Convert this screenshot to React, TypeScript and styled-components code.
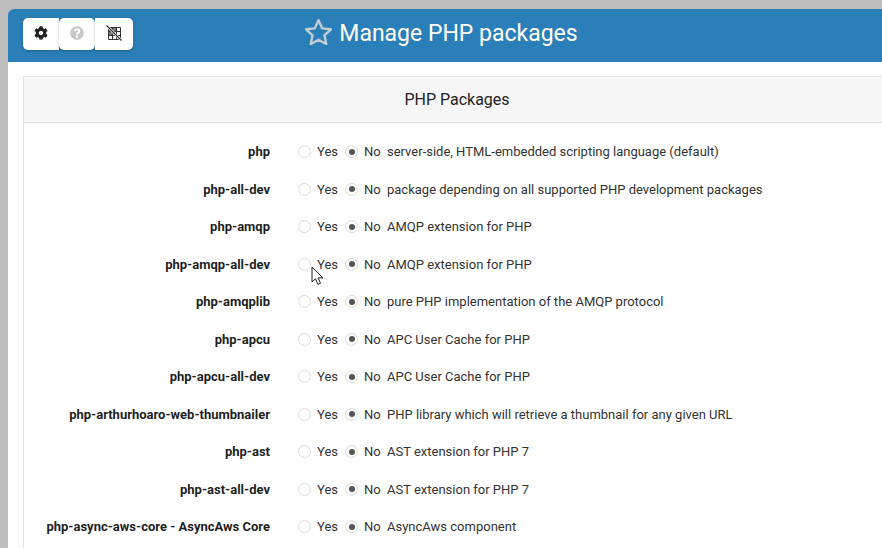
import styled, { createGlobalStyle } from "styled-components";
import { FaCog, FaQuestionCircle } from "react-icons/fa";

const GlobalStyle = createGlobalStyle`
  html, body {
    margin: 0;
    height: 100%;
    overflow: hidden;
    background: #bdbdbd;
    font-family: Roboto, "Liberation Sans", sans-serif;
  }
`;

const Page = styled.div`
  position: relative;
  width: 882px;
  height: 548px;
  padding: 9px 0 0 8px;
  box-sizing: border-box;
  overflow: hidden;
`;

const Window = styled.div`
  width: 874px;
  height: 539px;
  background: #fff;
  border-top-left-radius: 6px;
  overflow: hidden;
`;

const Header = styled.header`
  position: relative;
  height: 53px;
  background: #2a7fb8;
  display: flex;
  align-items: center;
  justify-content: center;
`;

const Toolbar = styled.div`
  position: absolute;
  left: 15px;
  top: 9px;
  display: flex;
`;

const ToolButton = styled.button<{ $muted?: boolean; $round?: string; $wide?: boolean }>`
  width: ${(p) => (p.$wide ? "38px" : "36px")};
  height: 32px;
  padding: 0 0 2px;
  border: 0;
  background: #fff;
  border-radius: ${(p) => p.$round ?? "5px"};
  box-shadow: 0 1px 3px rgba(0, 0, 0, 0.25);
  color: ${(p) => (p.$muted ? "#c8c8c8" : "#222")};
  display: flex;
  align-items: center;
  justify-content: center;
  font-size: 14px;
`;

const Title = styled.h1`
  margin: 0 0 0 -7px;
  display: flex;
  align-items: center;
  gap: 7px;
  color: #fff;
  font-size: 23px;
  font-weight: 400;
  line-height: 28px;
  position: relative;
  top: -2px;
`;

const StarIcon = styled.svg`
  width: 27px;
  height: 26px;
  position: relative;
  top: -2px;
`;

const Content = styled.div`
  padding: 14px 0 0 15px;
`;

const Panel = styled.section`
  width: 880px;
  height: 600px;
  border: 1px solid #e3e3e3;
  background: #fff;
`;

const PanelHeading = styled.h2`
  margin: 0;
  height: 45px;
  background: #f6f6f6;
  border-bottom: 1px solid #e3e3e3;
  display: flex;
  align-items: center;
  justify-content: center;
  padding-right: 14px;
  font-size: 16px;
  font-weight: 400;
  color: #222;
`;

const Rows = styled.div`
  padding-top: 10px;
`;

const Row = styled.div`
  height: 37.5px;
  display: grid;
  grid-template-columns: 246px 28px 47px 42px 1fr;
  align-items: center;
  font-size: 13px;
  color: #333;
`;

const Name = styled.div`
  text-align: right;
  font-weight: 700;
  color: #1f1f1f;
  white-space: nowrap;
`;

const Choice = styled.label`
  display: flex;
  align-items: center;
  gap: 6px;
`;

const Radio = styled.span<{ $checked?: boolean }>`
  width: 13px;
  height: 13px;
  border-radius: 50%;
  border: 1px solid #dcdcdc;
  box-sizing: border-box;
  background: #fff;
  display: flex;
  align-items: center;
  justify-content: center;

  &::after {
    content: "";
    display: ${(p) => (p.$checked ? "block" : "none")};
    width: 6px;
    height: 6px;
    border-radius: 50%;
    background: #555;
  }
`;

const Description = styled.div`
  white-space: nowrap;
`;

const Spacer = styled.div``;

const Cursor = styled.svg`
  position: absolute;
  left: 311px;
  top: 266px;
`;

const packages = [
  ["php", "server-side, HTML-embedded scripting language (default)"],
  ["php-all-dev", "package depending on all supported PHP development packages"],
  ["php-amqp", "AMQP extension for PHP"],
  ["php-amqp-all-dev", "AMQP extension for PHP"],
  ["php-amqplib", "pure PHP implementation of the AMQP protocol"],
  ["php-apcu", "APC User Cache for PHP"],
  ["php-apcu-all-dev", "APC User Cache for PHP"],
  ["php-arthurhoaro-web-thumbnailer", "PHP library which will retrieve a thumbnail for any given URL"],
  ["php-ast", "AST extension for PHP 7"],
  ["php-ast-all-dev", "AST extension for PHP 7"],
  ["php-async-aws-core - AsyncAws Core", "AsyncAws component"],
];

function GridOffIcon() {
  return (
    <svg width="16" height="16" viewBox="0 0 16 16" fill="none" stroke="#333" strokeWidth="1">
      <path d="M2.5 2.5h12v12h-12zM2.5 6.5h12M2.5 10.5h12M6.5 2.5v12M10.5 2.5v12" />
      <path d="M3 3h3v3H3zM7 3h3v3H7zM3 7h3v3H3z" fill="#777" stroke="none" />
      <path d="M0.5 0.5l15 15" stroke="#fff" strokeWidth="2.6" />
      <path d="M0.5 0.5l15 15" strokeWidth="1.2" />
    </svg>
  );
}

export default function App() {
  return (
    <>
      <GlobalStyle />
      <Page>
        <Window>
          <Header>
            <Toolbar>
              <ToolButton $round="5px 0 0 5px">
                <FaCog />
              </ToolButton>
              <ToolButton $muted>
                <FaQuestionCircle />
              </ToolButton>
              <ToolButton $wide $round="0 5px 5px 0">
                <GridOffIcon />
              </ToolButton>
            </Toolbar>
            <Title>
              <StarIcon viewBox="1 1 25 24" fill="none" stroke="#c3ccd3" strokeWidth="2.2" strokeLinejoin="round">
                <path d="M13.5 2l3.4 7.6 8.1.9-6 5.6 1.7 8.1-7.2-4.1-7.2 4.1 1.7-8.1-6-5.6 8.1-.9z" />
              </StarIcon>
              Manage PHP packages
            </Title>
          </Header>
          <Content>
            <Panel>
              <PanelHeading>PHP Packages</PanelHeading>
              <Rows>
                {packages.map(([name, desc]) => (
                  <Row key={name}>
                    <Name>{name}</Name>
                    <Spacer />
                    <Choice>
                      <Radio />
                      Yes
                    </Choice>
                    <Choice>
                      <Radio $checked />
                      No
                    </Choice>
                    <Description>{desc}</Description>
                  </Row>
                ))}
              </Rows>
            </Panel>
          </Content>
        </Window>
        <Cursor width="13" height="20" viewBox="0 0 13 20">
          <path d="M1 1v15l3.5-3.2 2.4 5.6 2.6-1.1-2.4-5.4H12z" fill="#fff" stroke="#222" strokeWidth="1" />
        </Cursor>
      </Page>
    </>
  );
}
